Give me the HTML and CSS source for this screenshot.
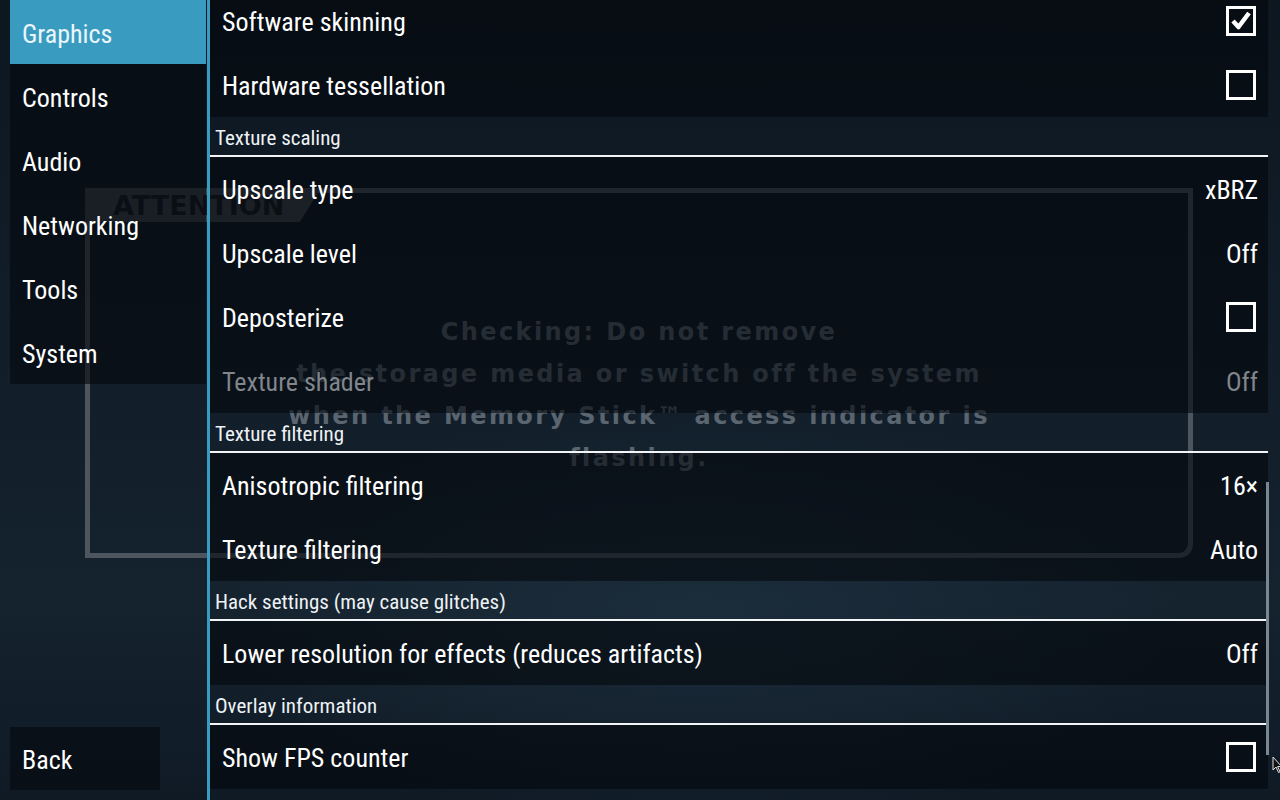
FILE: index.html
```html
<!DOCTYPE html>
<html>
<head>
<meta charset="utf-8">
<link rel="stylesheet" href="styles.css">
</head>
<body>
<div class="app">
  <div class="dialog">
    <div class="dialog-tab">ATTENTION</div>
    <div class="dialog-text">
      <p>Checking: Do not remove</p>
      <p>the storage media or switch off the system</p>
      <p>when the Memory Stick™ access indicator is</p>
      <p>flashing.</p>
    </div>
  </div>

  <aside class="sidebar">
    <nav class="tabs">
      <div class="tab active">Graphics</div>
      <div class="tab">Controls</div>
      <div class="tab">Audio</div>
      <div class="tab">Networking</div>
      <div class="tab">Tools</div>
      <div class="tab">System</div>
    </nav>
    <div class="back">Back</div>
  </aside>
  <div class="divider"></div>
  <main class="panel">
    <div class="list">
      <div class="row"><span class="label">Software skinning</span><span class="check on"><svg viewBox="0 0 30 30" width="30" height="30"><path d="M7 15 L12.5 21 L23 7" fill="none" stroke="#fff" stroke-width="4.5" stroke-linejoin="round"/></svg></span></div>
      <div class="row"><span class="label">Hardware tessellation</span><span class="check"></span></div>
      <div class="header">Texture scaling</div>
      <div class="row"><span class="label">Upscale type</span><span class="value">xBRZ</span></div>
      <div class="row"><span class="label">Upscale level</span><span class="value">Off</span></div>
      <div class="row"><span class="label">Deposterize</span><span class="check"></span></div>
      <div class="row disabled"><span class="label">Texture shader</span><span class="value">Off</span></div>
      <div class="header">Texture filtering</div>
      <div class="row"><span class="label">Anisotropic filtering</span><span class="value">16×</span></div>
      <div class="row"><span class="label">Texture filtering</span><span class="value">Auto</span></div>
      <div class="header">Hack settings (may cause glitches)</div>
      <div class="row"><span class="label">Lower resolution for effects (reduces artifacts)</span><span class="value">Off</span></div>
      <div class="header">Overlay information</div>
      <div class="row"><span class="label">Show FPS counter</span><span class="check"></span></div>
    </div>
    <div class="scrollbar"><div class="thumb"></div></div>
  </main>
  <svg class="cursor" width="10" height="18" viewBox="0 0 10 18"><path d="M1 1 L1 14 L4 11 L6.5 16.5 L8 15.8 L5.6 10.5 L9.5 10.5 Z" fill="#111" stroke="#ddd" stroke-width="1"/></svg>
</div>
</body>
</html>
```
FILE: styles.css
```css
* { box-sizing: border-box; }
html, body { margin: 0; padding: 0; }
body {
  width: 1280px;
  height: 800px;
  overflow: hidden;
  background: #101b26;
  font-family: "Roboto Condensed", "Liberation Sans Narrow", "DejaVu Sans Condensed", Roboto, sans-serif;
  font-stretch: condensed;
  color: #fff;
}
.app {
  position: relative;
  width: 1280px;
  height: 800px;
  display: flex;
  background:
    radial-gradient(ellipse 700px 300px at 700px 620px, rgba(40,62,80,0.35), rgba(0,0,0,0) 70%),
    linear-gradient(to bottom, #0d1720 0%, #111d29 40%, #15232f 75%, #0f1a25 100%);
}
.dialog {
  position: absolute;
  left: 85px;
  top: 188px;
  width: 1108px;
  height: 370px;
  border: 5px solid #4d565f;
  border-bottom-right-radius: 14px;
  z-index: 0;
}
.dialog-tab {
  position: absolute;
  left: -5px;
  top: -5px;
  width: 236px;
  height: 34px;
  background: #3e464e;
  clip-path: polygon(0 0, 100% 0, 91% 100%, 0 100%);
  font-family: "DejaVu Sans", sans-serif;
  font-weight: bold;
  font-size: 27px;
  letter-spacing: 0;
  color: #171c22;
  line-height: 36px;
  padding-left: 28px;
  font-stretch: normal;
  white-space: nowrap;
}
.dialog-text {
  position: absolute;
  left: 0;
  right: 0;
  top: 118px;
  text-align: center;
  font-family: "DejaVu Sans", sans-serif;
  font-weight: bold;
  font-size: 24px;
  letter-spacing: 2.4px;
  color: #5a6570;
  font-stretch: normal;
}
.dialog-text p { margin: 0; height: 42px; line-height: 42px; }

.sidebar {
  position: relative;
  z-index: 1;
  width: 207px;
  flex: none;
  padding-left: 10px;
  display: flex;
  flex-direction: column;
  justify-content: space-between;
  padding-bottom: 10px;
}
.tabs { display: flex; flex-direction: column; }
.tab {
  height: 64px;
  line-height: 68px;
  padding-left: 12px;
  font-size: 26px;
  background: rgba(5,8,13,0.62);
  width: 196px;
}
.tab.active { background: #3a9bc1; color: #eaf6fb; }
.back {
  width: 150px;
  height: 63px;
  line-height: 66px;
  padding-left: 12px;
  font-size: 26px;
  background: rgba(5,8,13,0.6);
}
.divider {
  position: relative;
  z-index: 1;
  width: 3px;
  flex: none;
  background: #3a9bc1;
}
.panel {
  position: relative;
  z-index: 1;
  flex: 1;
  display: flex;
  overflow: hidden;
}
.list {
  width: 1058px;
  margin-top: -11px;
  display: flex;
  flex-direction: column;
}
.row {
  height: 64px;
  flex: none;
  display: flex;
  align-items: center;
  justify-content: space-between;
  padding: 2px 10px 0 12px;
  background: rgba(4,7,12,0.6);
  font-size: 26px;
}
.row .check { margin-top: -2px; }
.row.disabled { color: #80868c; }
.header {
  height: 40px;
  flex: none;
  border-bottom: 2px solid #f2f4f6;
  padding-left: 5px;
  font-size: 21px;
  line-height: 42px;
  color: #eef2f5;
}
.check {
  width: 30px;
  height: 30px;
  border: 3px solid #fff;
  margin-right: 2px;
  position: relative;
}
.check svg { position: absolute; left: -3px; top: -3px; }
.scrollbar {
  width: 12px;
  position: relative;
}
.thumb {
  position: absolute;
  left: -2px;
  top: 482px;
  width: 3px;
  height: 273px;
  background: #7a8792;
}
.cursor {
  position: absolute;
  left: 1272px;
  top: 756px;
  z-index: 3;
}
```
